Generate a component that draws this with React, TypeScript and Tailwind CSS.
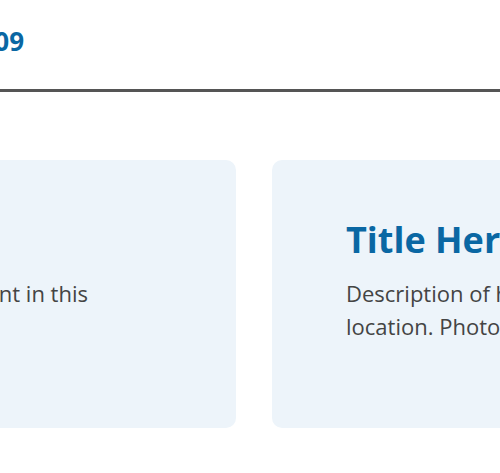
export default function App() {
  return (
    <div className="w-[500px] h-[473px] overflow-hidden bg-white" style={{ fontFamily: '"Open Sans", "Noto Sans", sans-serif' }}>
      <header className="h-[92px] border-b-[3px] border-[#555555] pt-[24px]">
        <div className="flex justify-end w-[24px]">
          <span className="whitespace-nowrap text-[26px] leading-[34px] font-bold text-[#0a67a3]">Call 555-0109</span>
        </div>
      </header>
      <main className="pt-[68px]">
        <div className="flex gap-[36px] ml-[-144px]">
          <div className="w-[380px] h-[268px] shrink-0 rounded-[10px] bg-[#edf4fa] px-[74px] pt-[58px]">
            <div className="h-[44px]" />
            <p className="mt-[15px] text-[22px] leading-[33px] text-[#444444] whitespace-nowrap">
              An event in this
              <br />
              area.
            </p>
          </div>
          <div className="w-[380px] h-[268px] shrink-0 rounded-[10px] bg-[#edf4fa] px-[74px] pt-[58px]">
            <h2 className="text-[36px] leading-[44px] font-bold text-[#0a67a3] whitespace-nowrap">Title Here</h2>
            <p className="mt-[15px] text-[22px] leading-[33px] text-[#444444] whitespace-nowrap">
              Description of historic
              <br />
              location. Photo credit.
            </p>
          </div>
        </div>
      </main>
    </div>
  );
}
